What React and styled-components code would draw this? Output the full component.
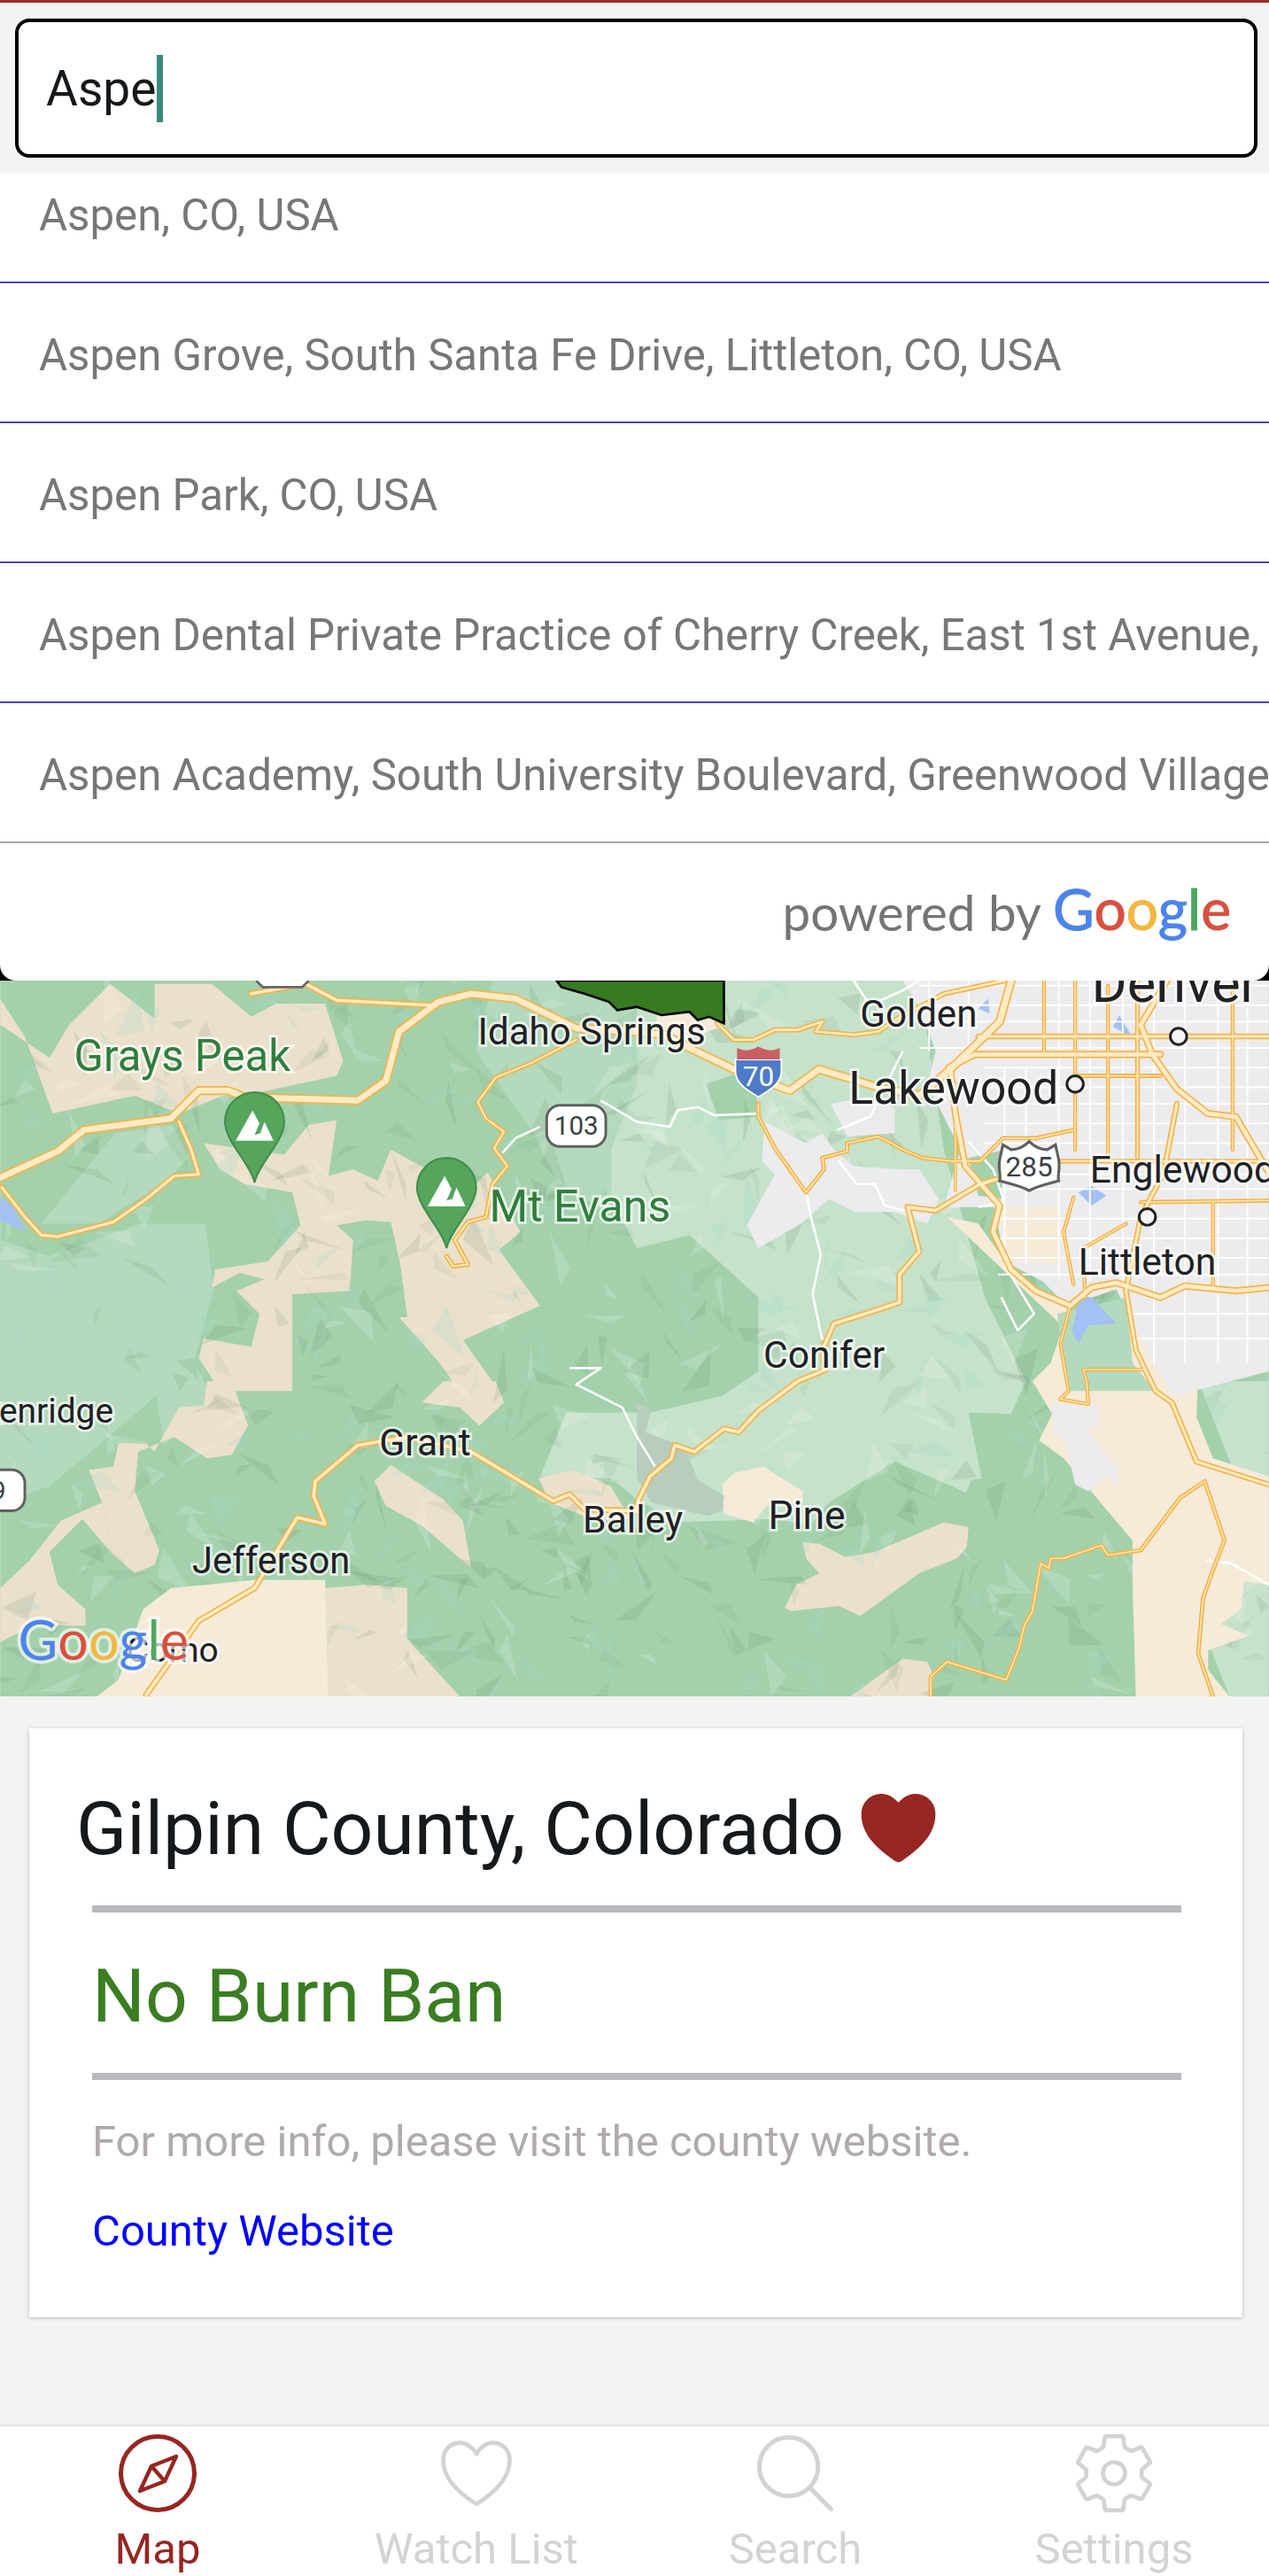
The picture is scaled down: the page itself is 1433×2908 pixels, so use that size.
import React from 'react';
import styled, { createGlobalStyle } from 'styled-components';
import { IoHeart, IoHeartOutline, IoSearchOutline, IoSettingsOutline } from 'react-icons/io5';

const GlobalStyle = createGlobalStyle`
  html, body { margin: 0; padding: 0; background: #f4f3f4; }
  body { font-family: Roboto, "Liberation Sans", sans-serif; }
`;

const Page = styled.div`
  width: 1433px;
  height: 2908px;
  overflow: hidden;
  display: flex;
  flex-direction: column;
  background: #f4f3f4;
  border-top: 3px solid #9e2a26;
  box-sizing: border-box;
`;

// Search field
const SearchBar = styled.div`
  padding: 18px 13px 18px 17px;
`;

const SearchField = styled.div`
  height: 157px;
  box-sizing: border-box;
  display: flex;
  align-items: center;
  padding-left: 31px;
  background: #fff;
  border: 4px solid #000;
  border-radius: 16px;
  font-size: 55px;
  color: #16191c;
`;

const Caret = styled.span`
  width: 7px;
  height: 76px;
  margin-left: 1px;
  background: #3a8a78;
`;

// Autocomplete list
const Backdrop = styled.div`
  background: #000;
`;

const Dropdown = styled.div`
  background: #fff;
  height: 911px;
  overflow: hidden;
  border-radius: 0 0 18px 18px;
`;

const Row = styled.div`
  height: 158px;
  box-sizing: border-box;
  display: flex;
  align-items: center;
  padding: 7px 0 0 44px;
  white-space: nowrap;
  overflow: hidden;
  font-size: 49.2px;
  color: #777;
  border-bottom: 1px solid ${(p) => (p.$last ? '#9a9aa0' : '#0000c8')};
  box-shadow: 0 1px 0 ${(p) => (p.$last ? '#b4b4b8' : '#8a8ae0')};
  margin-top: ${(p) => (p.$scrolled ? '-35px' : '0')};
`;

const Attribution = styled.div`
  height: 155px;
  display: flex;
  align-items: center;
  justify-content: flex-end;
  padding-right: 43px;
  font-family: Lato, sans-serif;
`;

const PoweredBy = styled.span`
  font-size: 56.5px;
  color: #757575;
  margin-right: 13px;
`;

const Wordmark = styled.span`
  font-size: 64px;
  margin-top: -6px;
  font-family: Lato, sans-serif;
  -webkit-text-stroke: 1px currentColor;
`;

const Letter = styled.span`
  color: ${(p) => p.$c};
`;

const GoogleLetters = () => (
  <>
    <Letter $c="#4c84ec">G</Letter>
    <Letter $c="#d9503f">o</Letter>
    <Letter $c="#f2b840">o</Letter>
    <Letter $c="#4c84ec">g</Letter>
    <Letter $c="#4fa860">l</Letter>
    <Letter $c="#d9503f">e</Letter>
  </>
);

// Map drawing
const MapFrame = styled.svg`
  display: block;
  width: 1433px;
  height: 808px;
  flex: none;
`;

const Casing = styled.polyline`
  fill: none;
  stroke: #f6b343;
  stroke-width: ${(p) => p.$w * 1.45}px;
  stroke-linejoin: round;
  stroke-linecap: round;
`;

const Fill = styled.polyline`
  fill: none;
  stroke: #fdebc6;
  stroke-width: ${(p) => Math.max(p.$w * 1.45 - 1.8, 0.7)}px;
  stroke-linejoin: round;
  stroke-linecap: round;
`;

const Street = styled.polyline`
  fill: none;
  stroke: #fff;
  stroke-width: ${(p) => p.$w || 1.4}px;
  stroke-linejoin: round;
`;

const Label = styled.text`
  font-family: Roboto, sans-serif;
  font-size: ${(p) => p.$size}px;
  fill: ${(p) => p.$fill || '#202124'};
  stroke: rgba(255, 255, 255, 0.7);
  stroke-width: 3px;
  paint-order: stroke;
  text-anchor: ${(p) => p.$anchor || 'start'};
`;

const ShieldText = styled.text`
  font-family: Roboto, sans-serif;
  font-size: ${(p) => p.$size}px;
  fill: ${(p) => p.$fill || '#3c3f43'};
  text-anchor: middle;
`;

const LogoText = styled.text`
  font-family: Lato, sans-serif;
  font-size: 33px;
  stroke: rgba(255, 255, 255, 0.65);
  stroke-width: 4px;
  paint-order: stroke;
`;

const C = {
  base: '#a3d1ab',
  mid: '#b4d9bc',
  light: '#c5e2ca',
  tan: '#ebe0cb',
  sand: '#f6ead9',
  urban: '#ecebee',
  water: '#a3c1f5',
};

const terrain = [
  // light forest band through the middle
  [C.light, '388,597 560,597 575,700 600,790 625,841 616,861 616,899 592,901 587,912 565,901 530,924 519,932 470,925 413,927 388,913 372,900 329,899 345,860 388,860 388,760 372,730 372,700 388,655'],
  [C.light, '730,841 773,841 773,1033 749,1033 736,1000 750,960 773,950'],
  [C.mid, '300,597 388,597 388,660 372,700 372,740 340,720 325,690 290,640'],
  [C.mid, '25,745 70,690 105,685 115,705 100,720 60,745'],
  [C.mid, '0,755 30,765 85,745 125,745 130,785 118,830 130,850 100,880 95,850 60,880 30,905 0,915'],
  // darker patches on top of it
  [C.base, '388,760 420,752 440,770 462,790 462,835 440,850 388,862'],
  [C.base, '430,660 460,650 462,680 438,682'],
  [C.base, '505,915 545,890 580,905 600,915 640,915 690,960 690,1033 520,1033 470,1000 480,945'],
  [C.base, '590,860 616,861 616,905 600,910'],
  // tan ridges
  [C.tan, '0,608 15,631 32,678 82,667 109,678 136,667 158,665 205,655 209,646 198,611 168,611 153,619 129,599 94,599 94,620 67,599 42,624 30,644 0,624'],
  [C.tan, '124,696 134,712 149,721 178,726 183,746 163,768 131,773 129,784 146,775 161,779 144,786 158,800 153,820 124,815 121,827 134,847 178,847 178,788 213,786 215,755 205,746 223,743 238,744 244,771 248,802 243,802 267,829 280,847 304,847 282,816 329,795 304,761 317,750 297,714 285,725 238,700 230,719 215,712 200,716 205,682 188,685 173,703'],
  [C.tan, '257,854 270,841 302,841 307,854 292,868 280,857'],
  [C.tan, '99,875 109,857 124,856 126,841 141,841 151,868 141,886 126,888 106,875 84,884 82,908 97,944 94,953 82,958 69,947 62,915 54,895 69,893 72,879 89,879 94,884'],
  [C.tan, '62,915 37,926 18,950 0,967 0,1000 20,990 52,990 52,980 35,965 30,945 50,925 69,947'],
  [C.tan, '228,902 238,892 270,913 282,926 287,955 257,929 235,917'],
  [C.tan, '328,900 350,895 372,905 384,925 360,925 335,915'],
  [C.tan, '489,939 499,940 515,948 533,945 575,927 590,930 589,942 583,949 560,958 524,984 511,978 482,981 478,979 485,965 499,958 491,949'],
  [C.tan, '518,1033 550,1010 565,1012 569,1021 566,1033'],
  [C.tan, '198,967 223,965 248,967 248,998 280,1033 200,1033'],
];

const plains = [
  [C.sand, '59,1033 72,1023 87,980 104,967 156,962 198,962 200,1033'],
  [C.sand, '440,904 447,897 465,893 489,908 489,915 467,917 459,927 441,922'],
  [C.sand, '577,741 596,745 616,773 631,786 652,795 640,830 629,841 641,861 633,877 648,888 673,918 690,938 690,967 692,1033 749,1033 736,1017 736,1005 761,996 744,989 756,980 758,963 773,965 773,899 739,888 729,863 730,830 700,820 690,800 650,810'],
  [C.sand, '400,597 440,597 440,625 420,632 400,628'],
];

const urban = [
  '550,597 773,597 773,835 735,845 715,850 700,825 680,785 650,795 635,780 612,768 606,735 575,735 585,700 575,680 565,660 570,640 560,613',
  '466,683 491,696 501,690 508,700 520,710 547,712 560,712 572,730 565,745 545,738 521,738 505,730 496,738 488,745 462,760 455,746 472,715 464,707',
  '641,855 669,855 669,868 662,870 673,886 681,893 681,904 673,899 663,908 655,904 649,877 642,874',
  '506,672 530,668 545,675 545,690 516,692',
];

const lakes = [
  '658,789 665,790 680,806 663,807 657,818 653,811',
  '657,726 665,722 674,728 665,734',
  '0,729 8,735 16,750 0,743',
  '596,614 602,608 603,617',
  '678,625 682,618 690,632',
];

const highways = [
  // I-70 and its western run
  { w: 3.8, pts: '0,717 35,701 51,688 104,681 121,664 139,664 149,668 218,670 235,658 243,628 267,610 287,605 314,608 351,626 385,628 405,630 420,638 447,651 481,664 499,651 535,662 560,667 579,651 609,622 616,597' },
  { w: 2.6, pts: '153,605 186,599 205,609 262,612' },
  { w: 2.4, pts: '1,723 15,741 25,752 35,753 69,744 89,730 106,716 121,715 116,699 109,683' },
  { w: 2.2, pts: '437,623 447,633 459,633 472,627 486,627 501,622 497,628 520,630 535,628 547,620 575,605 612,597' },
  { w: 2, pts: '351,633 324,647 302,656 291,671 296,681 307,689 301,699 309,710 300,721 296,741 285,744 277,755 285,770 276,771 272,765' },
  { w: 1.8, pts: '462,672 462,680 472,699 491,726 502,712 501,705 516,701 516,696 535,692 543,696 550,700 562,705 579,707 597,707 611,693 631,693 654,688' },
  // US-285 heading southwest
  { w: 2.6, pts: '607,718 597,721 570,737 553,735 560,762 548,776 548,793 533,798 508,806 501,822 503,834 486,841 462,859 450,872 441,870 423,884 411,880 409,888 396,899 389,913 388,920 356,919 347,910 337,914 287,884 248,875 218,880 192,902 191,911 198,928 181,924 155,967 121,987 89,1032' },
  // C-470
  { w: 3, pts: '579,651 582,678 588,710 609,734 605,750 616,773 631,786 652,795 665,784 680,781 707,790 722,783 753,786 773,784' },
  // Denver arterials
  { w: 2.4, pts: '596,631 773,631' },
  { w: 3, pts: '578,650 594,642 707,642' },
  { w: 2, pts: '646,707 773,707' },
  { w: 1.8, pts: '695,732 773,731' },
  { w: 1.8, pts: '655,655 707,655' },
  { w: 1.6, pts: '636,597 636,642' },
  { w: 1.6, pts: '655,597 655,700' },
  { w: 1.6, pts: '675,600 675,705' },
  { w: 2, pts: '693,597 693,705' },
  { w: 1.6, pts: '751,597 751,700' },
  { w: 1.6, pts: '739,732 739,785' },
  { w: 1.6, pts: '654,729 648,750 654,782' },
  { w: 3, pts: '711,597 695,624 702,642 717,663 736,678 753,680 773,714' },
  { w: 2.4, pts: '717,672 709,714 695,741 686,786 692,822 704,847 714,854 729,890 773,904' },
  { w: 1.8, pts: '734,902 746,938 739,956 733,973 730,1007 739,1033' },
  { w: 1.8, pts: '734,902 719,912 695,944 675,947 671,941 648,949 640,949 639,955 634,952 629,981 624,990 621,1003 613,1023 577,1012 567,1021 567,1033' },
  { w: 1.6, pts: '652,795 646,818 651,847 646,852 663,855 662,841 660,834 697,834 704,847' },
  { w: 1.6, pts: '661,790 660,760 686,745' },
  { w: 1.4, pts: '582,660 582,725' },
];

const streets = [
  { pts: '306,702 314,693 329,686' },
  { pts: '366,670 388,683 408,686 413,676 425,674 435,679 462,678' },
  { pts: '491,726 494,741 500,764 495,788 501,816' },
  { pts: '511,707 522,721 533,721 539,734 551,737' },
  { pts: '347,833 366,833 351,843 379,857 388,875 399,893' },
  { pts: '520,597 530,612 550,603 560,597' },
  { pts: '550,640 530,680 510,688' },
  { pts: '590,695 605,712 612,732 596,735' },
  { pts: '735,950 750,952 773,965' },
  { pts: '610,790 620,810 630,800 612,770' },
];

const makeGrid = () => {
  const lines = [];
  [600, 612, 622, 638, 650, 662, 672, 684, 696, 715, 724, 742, 754, 766, 776, 800, 815].forEach((y) => {
    const from = y > 780 ? 690 : y > 700 ? 608 : y > 640 ? 600 : 560;
    lines.push(`${from},${y} 773,${y}`);
  });
  [566, 590, 612, 625, 645, 664, 684, 703, 722, 742, 760].forEach((x) => {
    const top = 597;
    const bottom = x < 640 ? (x < 600 ? 640 : 770) : x < 700 ? 780 : 830;
    lines.push(`${x},${x > 600 && x < 640 ? 650 : top} ${x},${bottom}`);
  });
  return lines;
};

// seeded scatter for the faceted relief of the terrain layer
const makeFacets = (count) => {
  let seed = 4711;
  const rnd = () => {
    seed = (seed * 16807) % 2147483647;
    return seed / 2147483647;
  };
  const tones = [
    ['#5f7f5a', 0.13],
    ['#ffffff', 0.16],
    ['#a9dcd0', 0.25],
    ['#5f7f5a', 0.08],
  ];
  const out = [];
  for (let i = 0; i < count; i += 1) {
    const x = rnd() * 773;
    const y = 597 + rnd() * 436;
    const a = rnd() * 6.28;
    const len = 10 + rnd() * 24;
    const spread = 0.25 + rnd() * 0.7;
    const r = 5 + rnd() * 14;
    const [fill, opacity] = tones[Math.floor(rnd() * tones.length)];
    out.push({
      key: i,
      fill,
      opacity,
      pts: `${x},${y} ${x + Math.cos(a) * len},${y + Math.sin(a) * len} ${x + Math.cos(a + spread) * r},${y + Math.sin(a + spread) * r}`,
    });
  }
  return out;
};

const Pin = ({ x, y }) => (
  <g transform={`translate(${x} ${y})`}>
    <path
      d="M0 55 C-2 44 -18 30 -18 18 A18 18 0 0 1 18 18 C18 30 2 44 0 55 Z"
      fill="#56a55d"
      stroke="#418f4c"
      strokeWidth="1.2"
    />
    <path d="M-11.5 29.5 L-1.2 11 L3 19 L0 26 L3.5 25 L6 18 L11.5 29.5 Z" fill="#fff" />
  </g>
);

const TownDot = ({ x, y }) => (
  <circle cx={x} cy={y} r="5" fill="#f4f4f4" stroke="#202124" strokeWidth="1.6" />
);

const Terrain = () => (
  <MapFrame viewBox="0 597 773 436">
    <rect x="0" y="597" width="773" height="436" fill={C.base} />
    {terrain.map(([fill, pts]) => (
      <polygon key={pts} points={pts} fill={fill} />
    ))}
    {makeFacets(760).map((f) => (
      <polygon key={f.key} points={f.pts} fill={f.fill} opacity={f.opacity} />
    ))}
    {plains.map(([fill, pts]) => (
      <polygon key={pts} points={pts} fill={fill} />
    ))}
    <polygon points="388,854 397,858 393,872 417,881 425,901 441,911 440,920 431,923 397,915 388,900" fill="#b7cdbd" />
    {urban.map((pts) => (
      <polygon key={pts} points={pts} fill={C.urban} />
    ))}
    <polygon points="609,735 646,735 646,770 615,768" fill={C.sand} />
    <polygon points="590,705 612,700 610,730 596,728" fill={C.base} />
    <polygon points="644,800 686,790 690,830 704,847 650,847" fill={C.mid} />
    {lakes.map((pts) => (
      <polygon key={pts} points={pts} fill={C.water} />
    ))}
    {makeGrid().map((pts) => (
      <Street key={pts} points={pts} $w={1} />
    ))}
    {streets.map((s) => (
      <Street key={s.pts} points={s.pts} />
    ))}
    {highways.map((r) => (
      <Casing key={r.pts} points={r.pts} $w={r.w} />
    ))}
    {highways.map((r) => (
      <Fill key={r.pts} points={r.pts} $w={r.w} />
    ))}

    <polygon
      points="339,597 342,601 356,605 371,610 376,615 388,613 403,618 420,616 425,621 432,619 441,623 441,597"
      fill="#377a1f"
      stroke="#000"
      strokeWidth="1.4"
    />

    <path d="M156 597 L160 601 L184 601 L188 597" fill="#fff" stroke="#666" strokeWidth="1.5" />
    <rect x="333" y="673" width="36" height="25" rx="8" fill="#fff" stroke="#606060" strokeWidth="1.6" />
    <ShieldText x="351" y="691" $size="16">103</ShieldText>
    <rect x="-22" y="895" width="37" height="25" rx="8" fill="#fff" stroke="#606060" strokeWidth="1.6" />
    <ShieldText x="-1" y="913" $size="16">9</ShieldText>

    <path d="M448 653 L476 653 L476 660 C476 668 468 672 462 676 C456 672 448 668 448 660 Z" fill="#4e7ac7" stroke="#fff" strokeWidth="1" transform="translate(0 -8)" />
    <path d="M449 645 L449 638 C453 640 457 640 462 637 C467 640 471 640 475 638 L475 645 Z" fill="#c96060" />
    <ShieldText x="462" y="661" $size="17" $fill="#fff">70</ShieldText>

    <path d="M611 697 L616 700 C621 700 624 698 627 695 C630 698 633 700 638 700 L643 697 L645 706 C646 712 644 716 645 719 C638 721 632 722 627 725 C622 722 616 721 609 719 C610 716 608 712 609 706 Z" fill="#fff" stroke="#606060" strokeWidth="1.7" />
    <ShieldText x="627" y="716" $size="17">285</ShieldText>

    <TownDot x="718" y="631" />
    <TownDot x="655" y="660" />
    <TownDot x="699" y="741" />

    <Pin x={155} y={665} />
    <Pin x={272} y={705} />

    <Label x="45" y="652" $size="26.5" $fill="#2f7e3e">Grays Peak</Label>
    <Label x="298" y="744" $size="27" $fill="#2f7e3e">Mt Evans</Label>
    <Label x="291" y="636" $size="22.7">Idaho Springs</Label>
    <Label x="524" y="625" $size="22.7">Golden</Label>
    <Label x="665" y="610" $size="33">Denver</Label>
    <Label x="517" y="672" $size="28">Lakewood</Label>
    <Label x="664" y="720" $size="23">Englewood</Label>
    <Label x="657" y="776" $size="23">Littleton</Label>
    <Label x="465" y="833" $size="23">Conifer</Label>
    <Label x="69" y="866" $size="21" $anchor="end">Breckenridge</Label>
    <Label x="231" y="886" $size="23">Grant</Label>
    <Label x="355" y="933" $size="23">Bailey</Label>
    <Label x="468" y="931" $size="24">Pine</Label>
    <Label x="117" y="958" $size="22.5">Jefferson</Label>
    <Label x="133" y="1012" $size="21" $anchor="end">Como</Label>
    <LogoText x="11" y="1011">
      <tspan fill="#4c84ec">G</tspan>
      <tspan fill="#d9503f">o</tspan>
      <tspan fill="#f2b840">o</tspan>
      <tspan fill="#4c84ec">g</tspan>
      <tspan fill="#4fa860">l</tspan>
      <tspan fill="#d9503f">e</tspan>
    </LogoText>
  </MapFrame>
);

// Result card
const Content = styled.div`
  flex: 1;
  padding: 36px 30px 0 33px;
`;

const Card = styled.div`
  height: 665px;
  box-sizing: border-box;
  background: #fff;
  box-shadow: 0 1px 4px rgba(0, 0, 0, 0.25);
  padding: 0 69px 0 71px;
`;

const TitleRow = styled.div`
  height: 200px;
  box-sizing: border-box;
  padding-top: 26px;
  display: flex;
  align-items: center;
  gap: 10px;
  margin-left: -18px;
  color: #16191c;
  font-size: 84px;
  white-space: nowrap;
`;

const HeartIcon = styled(IoHeart)`
  flex: none;
  color: #962621;
  margin-top: -2px;
`;

const Rule = styled.div`
  height: 8px;
  background: #b9b8bc;
`;

const Status = styled.div`
  height: 181px;
  box-sizing: border-box;
  padding-top: 7px;
  display: flex;
  align-items: center;
  font-size: 84px;
  color: #3a7d22;
`;

const Note = styled.p`
  margin: 40px 0 0;
  font-size: 49px;
  line-height: 60px;
  color: #b0aaaa;
`;

const CountyLink = styled.a`
  display: block;
  margin-top: 41px;
  font-size: 49px;
  line-height: 60px;
  color: #0000ff;
  text-decoration: none;
`;

// Bottom tabs
const TabBar = styled.nav`
  height: 171px;
  flex: none;
  box-sizing: border-box;
  display: grid;
  grid-template-columns: repeat(4, 360px);
  margin-left: -2px;
  width: 1440px;
  background: #fff;
  border-top: 2px solid #e4e3e5;
`;

const Tab = styled.div`
  display: flex;
  flex-direction: column;
  align-items: center;
  color: ${(p) => (p.$active ? '#962621' : '#d3d3d3')};
  font-size: 49px;
  line-height: 56px;
`;

const TabIcon = styled.div`
  height: 111px;
  box-sizing: border-box;
  padding-bottom: 6px;
  display: flex;
  align-items: center;
  justify-content: center;

  .outline path,
  .outline circle {
    stroke-width: 24px;
  }
`;

const CompassIcon = () => (
  <svg width="88" height="88" viewBox="0 0 88 88" fill="none" stroke="currentColor">
    <circle cx="44" cy="44" r="41.5" strokeWidth="5" />
    <path d="M65 25 L37 36 L24 64 L52 53 Z M37 36 L52 53" strokeWidth="4.4" strokeLinejoin="round" />
  </svg>
);

const tabs = [
  { label: 'Map', icon: <CompassIcon />, active: true },
  { label: 'Watch List', icon: <IoHeartOutline className="outline" size={100} /> },
  { label: 'Search', icon: <IoSearchOutline className="outline" size={108} /> },
  { label: 'Settings', icon: <IoSettingsOutline className="outline" size={100} /> },
];

const results = [
  'Aspen, CO, USA',
  'Aspen Grove, South Santa Fe Drive, Littleton, CO, USA',
  'Aspen Park, CO, USA',
  'Aspen Dental Private Practice of Cherry Creek, East 1st Avenue, Denver, CO, USA',
  'Aspen Academy, South University Boulevard, Greenwood Village, CO, USA',
];

const App = () => (
  <>
    <GlobalStyle />
    <Page>
      <SearchBar>
        <SearchField>
          Aspe
          <Caret />
        </SearchField>
      </SearchBar>
      <Backdrop>
        <Dropdown>
          {results.map((text, i) => (
            <Row key={text} $scrolled={i === 0} $last={i === results.length - 1}>
              {text}
            </Row>
          ))}
          <Attribution>
            <PoweredBy>powered by</PoweredBy>
            <Wordmark>
              <GoogleLetters />
            </Wordmark>
          </Attribution>
        </Dropdown>
      </Backdrop>
      <Terrain />
      <Content>
        <Card>
          <TitleRow>
            Gilpin County, Colorado
            <HeartIcon size={103} />
          </TitleRow>
          <Rule />
          <Status>No Burn Ban</Status>
          <Rule />
          <Note>For more info, please visit the county website.</Note>
          <CountyLink href="#">County Website</CountyLink>
        </Card>
      </Content>
      <TabBar>
        {tabs.map((tab) => (
          <Tab key={tab.label} $active={tab.active}>
            <TabIcon>{tab.icon}</TabIcon>
            {tab.label}
          </Tab>
        ))}
      </TabBar>
    </Page>
  </>
);

export default App;
